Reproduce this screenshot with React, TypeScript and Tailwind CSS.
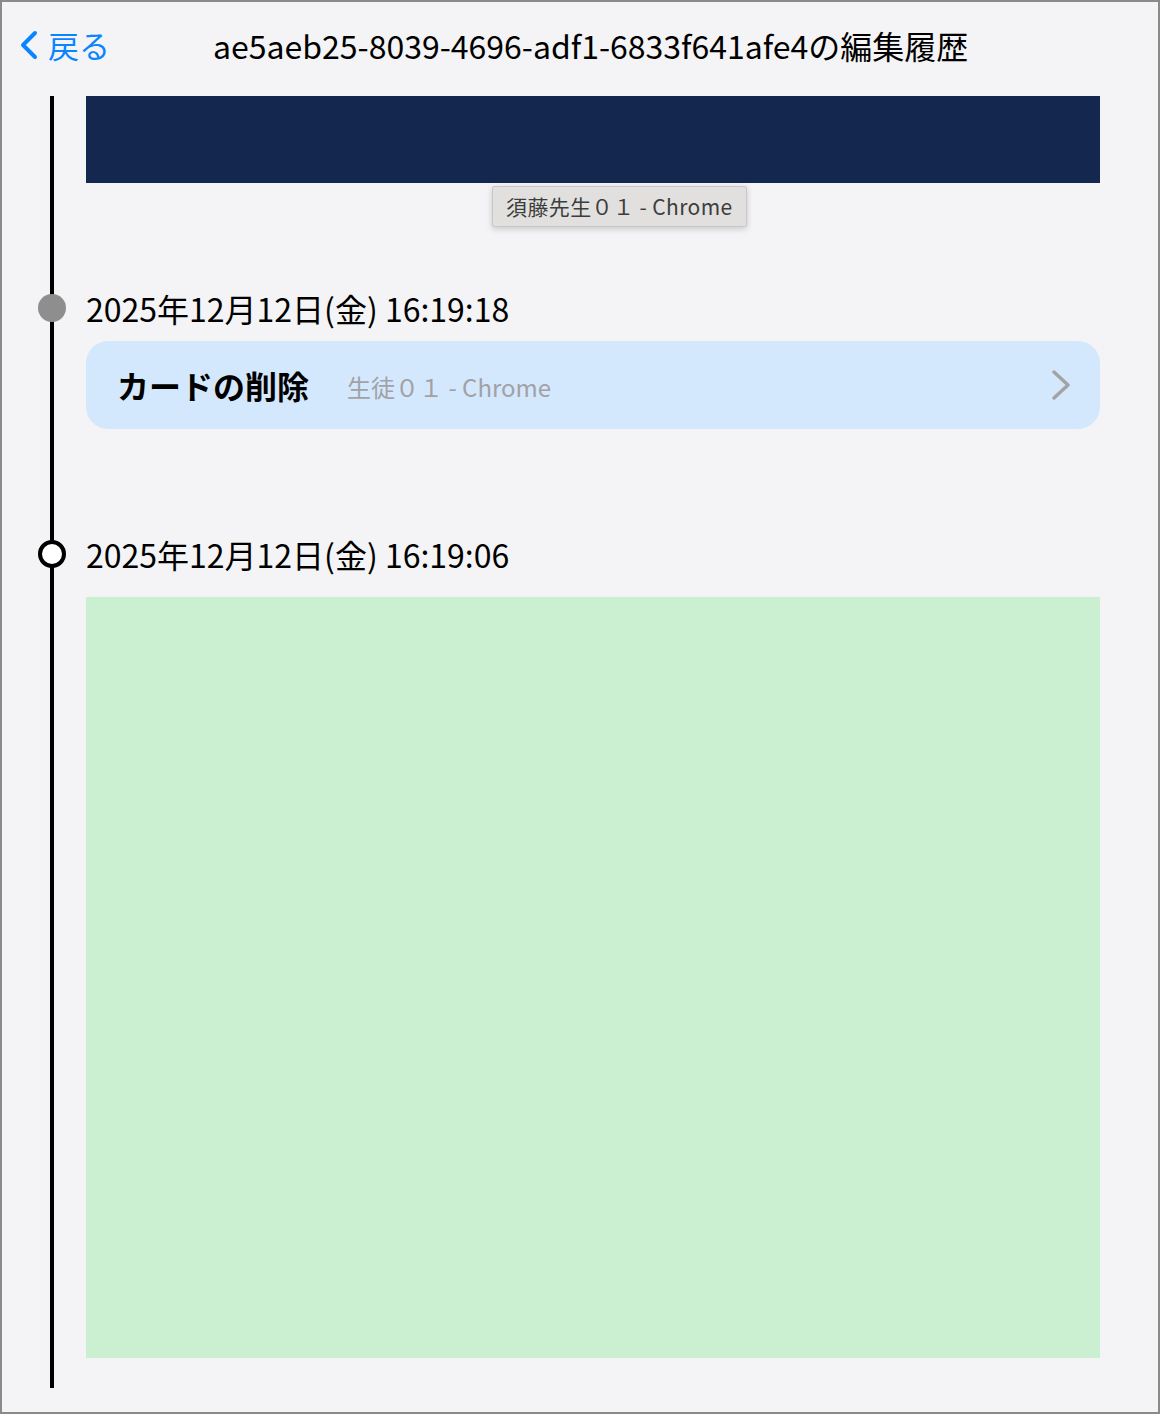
import React from "react";

const font = { fontFamily: '"Noto Sans CJK JP", "Noto Sans", sans-serif' };

export default function App() {
  return (
    <div
      className="w-[1160px] h-[1414px] border-2 border-[#8a8a8a] bg-[#f4f4f6] overflow-hidden flex flex-col text-black"
      style={font}
    >
      {/* Header */}
      <div className="h-[94px] shrink-0 flex items-center pb-[8px]">
        <div className="flex items-center pl-[14px] text-[#0a84ff]">
          <svg width="24" height="32" viewBox="0 0 24 32" fill="none">
            <path d="M19 4 L7 16 L19 28" stroke="#0a84ff" strokeWidth="4" strokeLinecap="round" strokeLinejoin="round" />
          </svg>
          <span className="ml-[8px] text-[31px] leading-[40px]">戻る</span>
        </div>
        <div className="ml-[103px] text-[32px] leading-[40px]">
          ae5aeb25-8039-4696-adf1-6833f641afe4の編集履歴
        </div>
      </div>

      {/* Timeline */}
      <div className="flex flex-1 min-h-0">
        <div className="w-[84px] shrink-0 pl-[48px]">
          <div className="w-[4px] h-[1292px] bg-black" />
        </div>
        <div className="w-[1014px] flex flex-col">
          {/* navy block + tooltip */}
          <div className="relative">
            <div className="h-[87px] bg-[#13274f]" />
            <div className="absolute left-[406px] top-[90px] h-[41px] px-[13px] flex items-center bg-[#e1e0de] border border-[#c9c8c6] rounded-[2px] shadow-[0_2px_6px_rgba(0,0,0,0.18)] text-[21px] tracking-[0.4px] text-[#3d3d3d] whitespace-nowrap">
              須藤先生０１ - Chrome
            </div>
          </div>

          {/* entry 1 */}
          <div className="mt-[105px] flex items-center -ml-[48px] h-[40px]">
            <div className="w-[28px] h-[28px] rounded-full bg-[#8e8e8e] shrink-0" />
            <div className="ml-[20px] text-[32px] leading-[40px]">2025年12月12日(金) 16:19:18</div>
          </div>
          <div className="mt-[13px] h-[88px] rounded-[22px] bg-[#d3e8fd] flex items-center pl-[31px] pr-[26px]">
            <span className="text-[32px] font-bold leading-[40px]">カードの削除</span>
            <span className="ml-[38px] text-[24px] leading-[40px] text-[#a1a1a6] mt-[4px]">生徒０１ - Chrome</span>
            <svg className="ml-auto" width="24" height="34" viewBox="0 0 24 34" fill="none">
              <path d="M4 4 L18 17 L4 30" stroke="#a3a3a3" strokeWidth="3.5" strokeLinecap="round" strokeLinejoin="round" />
            </svg>
          </div>

          {/* entry 2 */}
          <div className="mt-[105px] flex items-center -ml-[48px] h-[40px]">
            <div className="w-[28px] h-[28px] rounded-full bg-white border-[4px] border-black shrink-0" />
            <div className="ml-[20px] text-[32px] leading-[40px]">2025年12月12日(金) 16:19:06</div>
          </div>
          <div className="mt-[23px] h-[761px] bg-[#cbefd1]" />
        </div>
      </div>
    </div>
  );
}
